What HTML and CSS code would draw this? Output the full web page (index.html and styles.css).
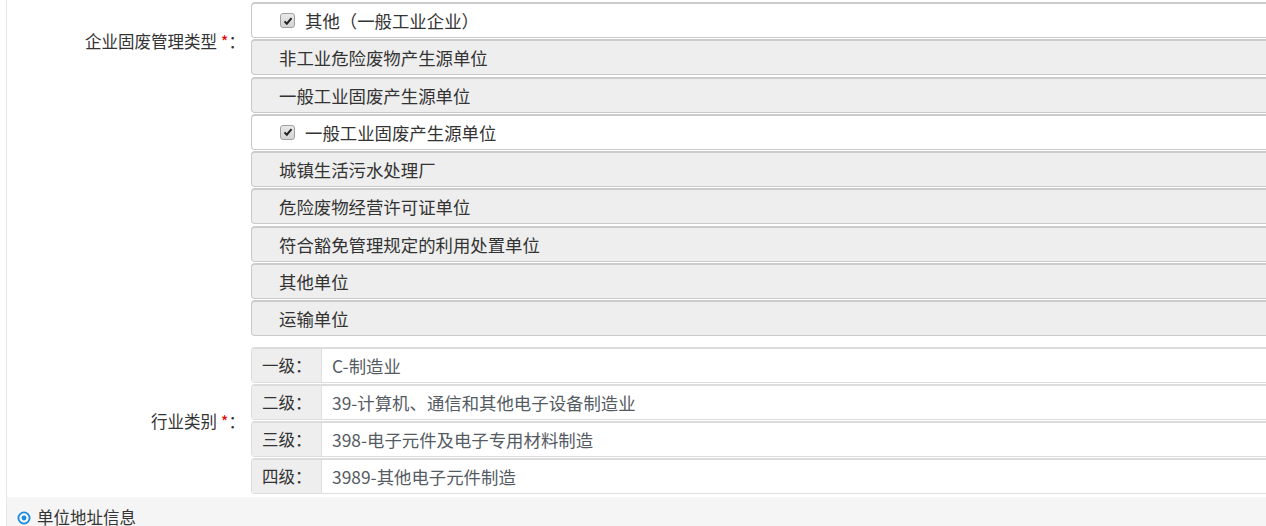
FILE: index.html
```html
<!DOCTYPE html>
<html lang="zh-CN">
<head>
  <meta charset="utf-8">
  <meta name="viewport" content="width=device-width, initial-scale=1.0">
  <title>企业信息</title>
  <link rel="stylesheet" href="styles.css">
</head>
<body>

  <div class="panel">
    <div class="form-row">
      <label class="form-label top">企业固废管理类型 <span class="req">*</span>：</label>
      <ul class="type-list">
        <li class="item checked"><span class="box"><svg viewBox="0 0 12 12" width="10" height="10"><path d="M1.8 6.4 L4.6 9.2 L10.2 2.6" fill="none" stroke="#222" stroke-width="2.4"/></svg></span>其他（一般工业企业）</li>
        <li class="item">非工业危险废物产生源单位</li>
        <li class="item">一般工业固废产生源单位</li>
        <li class="item checked"><span class="box"><svg viewBox="0 0 12 12" width="10" height="10"><path d="M1.8 6.4 L4.6 9.2 L10.2 2.6" fill="none" stroke="#222" stroke-width="2.4"/></svg></span>一般工业固废产生源单位</li>
        <li class="item">城镇生活污水处理厂</li>
        <li class="item">危险废物经营许可证单位</li>
        <li class="item">符合豁免管理规定的利用处置单位</li>
        <li class="item">其他单位</li>
        <li class="item">运输单位</li>
      </ul>
    </div>

    <div class="form-row middle">
      <label class="form-label">行业类别 <span class="req">*</span>：</label>
      <div class="level-list">
        <div class="level"><span class="level-name">一级：</span><span class="level-value">C-制造业</span></div>
        <div class="level"><span class="level-name">二级：</span><span class="level-value">39-计算机、通信和其他电子设备制造业</span></div>
        <div class="level"><span class="level-name">三级：</span><span class="level-value">398-电子元件及电子专用材料制造</span></div>
        <div class="level"><span class="level-name">四级：</span><span class="level-value">3989-其他电子元件制造</span></div>
      </div>
    </div>

    <div class="section-head">
      <svg class="dot-icon" viewBox="0 0 14 14" width="14" height="14"><circle cx="7" cy="7" r="5.6" fill="none" stroke="#1a8be0" stroke-width="1.8"/><circle cx="7" cy="7" r="2.4" fill="#1a8be0"/></svg>
      单位地址信息
    </div>
  </div>

</body>
</html>
```

FILE: styles.css
```css
html, body { overflow: hidden; }
body {
  margin: 0;
  background: #fff;
  font-family: "Noto Sans CJK SC", "Noto Sans", sans-serif;
  color: #333;
}
.panel {
  width: 1280px;
  margin-left: 6px;
  padding-top: 2px;
  border-left: 1px solid #e6e6e6;
}
.form-row { display: flex; align-items: flex-start; }
.form-row.middle { align-items: center; margin-top: 10px; }
.form-label {
  width: 238px;
  flex: none;
  text-align: right;
  font-size: 16.5px;
  line-height: 22px;
}
.form-label.top { margin-top: 28px; }
.req { color: #e00; }

/* Lijst met beheertypes */
.type-list {
  flex: 1;
  margin: 0 0 0 6px;
  padding: 0;
  list-style: none;
}
.item {
  display: flex;
  align-items: center;
  box-sizing: border-box;
  height: 36px;
  margin-bottom: 1.25px;
  padding-left: 27px;
  font-size: 17.4px;
  color: #333;
  background: #eee;
  border: 1px solid #c9c9c9;
  border-top: 2px solid #cbcbcb;
  border-radius: 4px 0 0 4px;
}
.item.checked { background: #fff; padding-left: 28px; }
.box {
  display: flex;
  align-items: center;
  justify-content: center;
  width: 13px;
  height: 13px;
  margin-right: 10px;
  background: linear-gradient(#e8e8e8, #d4d4d4);
  border: 1px solid #a0a0a0;
  border-radius: 3px;
}

/* Industrie niveaus */
.level-list { flex: 1; margin-left: 6px; }
.level {
  display: flex;
  box-sizing: border-box;
  height: 36px;
  margin-bottom: 1px;
  border: 1px solid #ddd;
  border-top: 2px solid #dcdcdc;
  border-radius: 4px 0 0 4px;
  font-size: 17.4px;
  line-height: 33px;
}
.level-name {
  width: 70px;
  padding-left: 10px;
  box-sizing: border-box;
  background: #eee;
  border-right: 1px solid #e0e0e0;
  color: #333;
  font-size: 16.5px;
}
.level-value {
  flex: 1;
  padding-left: 10px;
  color: #555b63;
}

.section-head {
  display: flex;
  align-items: flex-start;
  gap: 6px;
  margin-top: 2px;
  height: 40px;
  padding-left: 10px;
  padding-top: 9px;
  box-sizing: border-box;
  background: #f5f5f5;
  font-size: 16.5px;
  line-height: 22px;
}
.dot-icon { margin-top: 5px; }
```
